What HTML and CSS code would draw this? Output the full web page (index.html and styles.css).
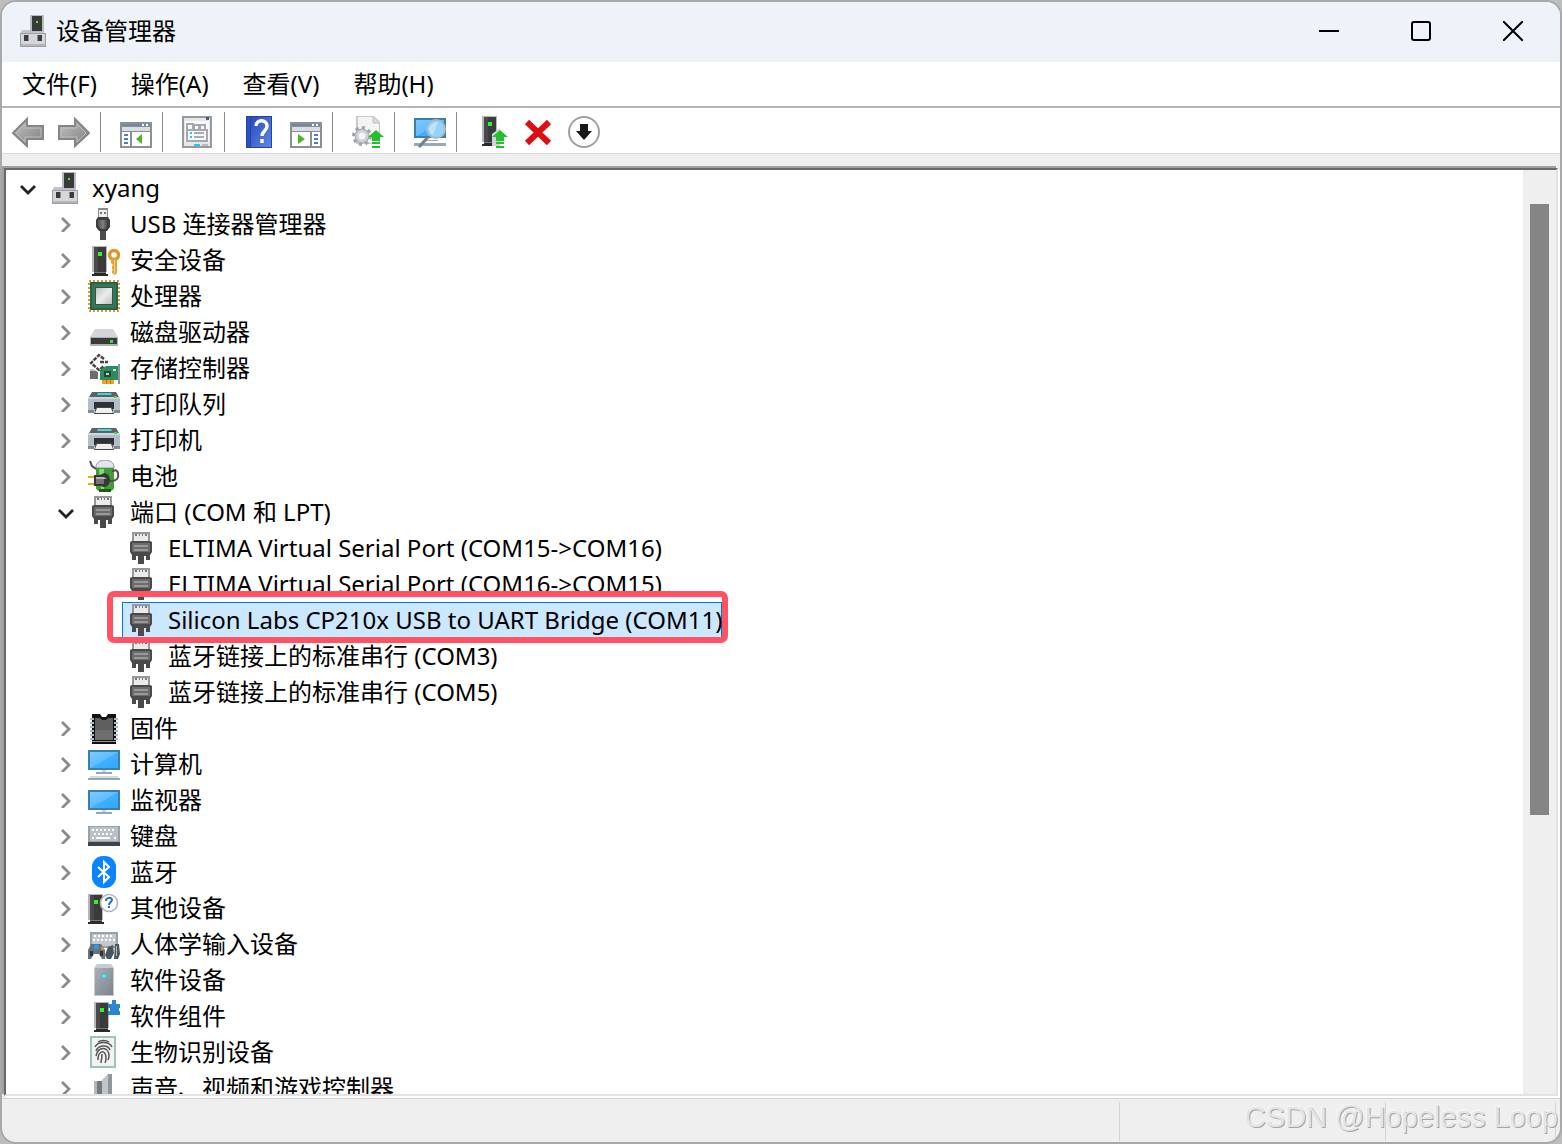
FILE: index.html
```
<!DOCTYPE html>
<html lang="zh-CN">
<head>
    <meta charset="UTF-8">
    <meta name="viewport" content="width=device-width, initial-scale=1.0">
    <title>设备管理器</title>
    <link rel="stylesheet" href="styles.css">
</head>
<body>
    <!-- Icon library -->
    <svg class="sprite" aria-hidden="true">
        <defs>
            <linearGradient id="g-dark" x1="0" y1="0" x2="1" y2="0"><stop offset="0" stop-color="#555"/><stop offset="0.5" stop-color="#808080"/><stop offset="1" stop-color="#3c3c3c"/></linearGradient>
            <linearGradient id="g-arrow" x1="0" y1="0" x2="1" y2="1"><stop offset="0" stop-color="#c4c4c4"/><stop offset="1" stop-color="#7d7d7d"/></linearGradient>
            <linearGradient id="g-screen" x1="0" y1="0" x2="1" y2="1"><stop offset="0" stop-color="#7ccbff"/><stop offset="0.5" stop-color="#5fbcff"/><stop offset="0.52" stop-color="#3fb0ff"/><stop offset="1" stop-color="#2fa8fd"/></linearGradient>
            <linearGradient id="g-help" x1="0" y1="0" x2="1" y2="1"><stop offset="0" stop-color="#2b4cb8"/><stop offset="1" stop-color="#5b86ea"/></linearGradient>
            <linearGradient id="g-case" x1="0" y1="0" x2="1" y2="1"><stop offset="0" stop-color="#a9b0b6"/><stop offset="1" stop-color="#7b858d"/></linearGradient>
            <linearGradient id="g-chip" x1="0" y1="0" x2="1" y2="1"><stop offset="0" stop-color="#c2c2c2"/><stop offset="0.5" stop-color="#ececec"/><stop offset="1" stop-color="#bdbdbd"/></linearGradient>
        </defs>

        <symbol id="i-device" viewBox="0 0 32 32">
            <path d="M12 0h14v17H12z" fill="#b9bcc0"/>
            <path d="M14 1h10v15H14z" fill="#3a3a3a"/>
            <path d="M18 6h2v2h-2z" fill="#3df23d"/>
            <path d="M4 15h8v2h14v2H2z" fill="#c3c3ca"/>
            <path d="M2 18h26v14H2z" fill="#9d9da3"/>
            <path d="M3 19h24v10H3z" fill="#d5d5dc"/>
            <path d="M3 29h24v2H3z" fill="#b5b5bc"/>
            <path d="M6 20h4v6H6zM20 20h4v6h-4z" fill="#3b3b3b"/>
            <path d="M10 20h1v6h-1zM19 20h1v6h-1z" fill="#8c8c92"/>
        </symbol>

        <symbol id="i-tower" viewBox="0 0 16 30">
            <path d="M0 0h15v26H0z" fill="#b4b8bd"/>
            <path d="M2 1h12v25H2z" fill="#3b3b3b"/>
            <path d="M2 1h4v25H2z" fill="#4a4a4a"/>
            <path d="M6 6h4v4H6z" fill="#2ff52f"/>
            <path d="M2 26h12v1H2z" fill="#777"/>
            <path d="M2 27h12v1h2v2H0v-2h2z" fill="#2b2b2b"/>
        </symbol>

        <symbol id="i-usb" viewBox="0 0 32 32">
            <path d="M10 0h10v10H10z" fill="#8b8b8b"/>
            <path d="M11 2h8v8h-8z" fill="#ececec"/>
            <path d="M12 4h2v2h-2zM16 4h2v2h-2z" fill="#777"/>
            <path d="M8 12l2-3h10l2 3v7l-3 4h-8l-3-4z" fill="#3d3d3d"/>
            <path d="M10 12h10v6l-3 3h-4l-3-3z" fill="url(#g-dark)"/>
            <path d="M12 23h6v9h-6z" fill="#4c4c4c"/>
        </symbol>

        <symbol id="i-security" viewBox="0 0 32 32">
            <use href="#i-tower" x="4" y="2" width="16" height="30"/>
            <circle cx="26" cy="11" r="4.5" fill="none" stroke="#d99a2b" stroke-width="3.5"/>
            <path d="M23 15h6v14l-2 2-3-2v-2l1-1-1-1v-3l1-1-2-2z" fill="#e2a438"/>
            <path d="M26 16h1v13h-1z" fill="#f6d083"/>
        </symbol>

        <symbol id="i-cpu" viewBox="0 0 32 32">
            <rect x="1" y="1" width="30" height="30" fill="none" stroke="#cf9b3a" stroke-width="2" stroke-dasharray="2 2"/>
            <path d="M2 2h28v28H2z" fill="#2c6148"/>
            <path d="M4 4h24v24H4z" fill="#38765a"/>
            <path d="M7 7h18v18H7z" fill="#2a5a44"/>
            <path d="M8 8h16v16H8z" fill="url(#g-chip)"/>
        </symbol>

        <symbol id="i-disk" viewBox="0 0 32 32">
            <path d="M7 13h18l5 8H2z" fill="#d3d5d8"/>
            <path d="M2 21h28v9H2z" fill="#aeb1b5"/>
            <path d="M3 22h26v6H3z" fill="#3a3a3a"/>
            <path d="M22 24h3v3h-3z" fill="#35e635"/>
        </symbol>

        <symbol id="i-storage" viewBox="0 0 32 32">
            <path d="M2 18l8-2v11H2z" fill="#6b6e70"/>
            <path d="M2 17h8v2H2z" fill="#c2c5c8"/>
            <path d="M16 7l-5-4-8 8 8 7 5-4M12 10h8" fill="none" stroke="#fff" stroke-width="5"/>
            <path d="M16 7l-5-4-8 8 8 7 5-4M12 10h8" fill="none" stroke="#444" stroke-width="2.4" stroke-dasharray="4 1"/>
            <path d="M12 28V18l6-4h12v14z" fill="#2f8a60"/>
            <path d="M16 19h7v6h-7z" fill="#234638"/>
            <path d="M18 21h3v2h-3z" fill="#b5d9c7"/>
            <path d="M25 17h3v2h-3z" fill="#bfe6d3"/>
            <path d="M14 28h12v4H14z" fill="#f0a21d"/>
            <path d="M18 28h1v4h-1zM22 28h1v4h-1z" fill="#c67c0a"/>
            <path d="M30 12h2v20h-2z" fill="#8b949a"/>
        </symbol>

        <symbol id="i-printer" viewBox="0 0 32 32">
            <path d="M4 4h24l3 5H1z" fill="#59636c"/>
            <path d="M10 5h13l1 2H9z" fill="#45d6cb"/>
            <path d="M0 9h32v14H0z" fill="#b3bec8"/>
            <path d="M0 9h32v2H0z" fill="#cfd7de"/>
            <path d="M26 8h3v2h-3z" fill="#2fe82f"/>
            <path d="M0 22h6v3H0zM26 22h6v3h-6z" fill="#7f8a93"/>
            <path d="M6 14h20v7H6z" fill="#2f3335"/>
            <path d="M8 19h16l2 7H6z" fill="#444"/>
            <path d="M9 20h14l2 5H7z" fill="#f0f0f0"/>
        </symbol>

        <symbol id="i-battery" viewBox="0 0 32 32">
            <path d="M8 7c0-4 4-7 9-7s9 3 9 7v1H8z" fill="#e4e4ee" stroke="#8f8fa8"/>
            <path d="M8 8h18v20c0 2-4 4-9 4s-9-2-9-4z" fill="#3f9e35"/>
            <path d="M11 9h5v21h-3z" fill="#85dd6e"/>
            <path d="M11 29h12v3H11z" fill="#1f5a1b"/>
            <path d="M2 1l2 5 4 3M22 21c8 0 9-4 8-8s-5-3-5-1" fill="none" stroke="#4c4c4c" stroke-width="2"/>
            <path d="M0 16h7v2H0zM0 23h7v2H0z" fill="#e0b218"/>
            <path d="M6 15h6l4-2c4 0 6 4 6 7s-2 7-6 7l-4-1H6z" fill="#363636"/>
            <path d="M8 17h6l2 2v5H8z" fill="#757575"/>
            <path d="M8 17h8l3 2H8z" fill="#b5b5b5"/>
        </symbol>

        <symbol id="i-port" viewBox="0 0 32 32">
            <path d="M6 0h18v10H6z" fill="#999"/>
            <path d="M8 2h14v8H8z" fill="#ebebeb"/>
            <path d="M9 2h2v2H9zM13 2h1v2h-1zM16 2h1v2h-1zM19 2h2v2h-2z" fill="#777"/>
            <path d="M4 10l2-1h18l2 1v10l-2 3H6l-2-3z" fill="#4a4a4a"/>
            <path d="M6 11h18v9H6z" fill="#6c6c6c"/>
            <path d="M8 13h14v2H8zM8 17h14v2H8z" fill="#999"/>
            <path d="M6 22h18v2H6zM6 24h4v4H6zM20 24h4v4h-4zM12 23h6v9h-6z" fill="#4a4a4a"/>
        </symbol>

        <symbol id="i-firmware" viewBox="0 0 32 32">
            <path d="M4 2h8l2 3h4l2-3h8v30H4z" fill="#111"/>
            <path d="M7 6h5l2 2h4l2-2h5v22H7z" fill="#5f5f5f"/>
            <path d="M7 18h18v10H7z" fill="#6e6e6e"/>
            <path d="M4 29h24v1H4z" fill="#999"/>
            <path d="M4 6v24M28 6v24" stroke="#aeb9cc" stroke-width="4" stroke-dasharray="2 2"/>
        </symbol>

        <symbol id="i-computer" viewBox="0 0 32 32">
            <path d="M0 2h32v20H0z" fill="#3a7fa9"/>
            <path d="M2 4h28v16H2z" fill="url(#g-screen)"/>
            <path d="M14 22h4v2h-4z" fill="#cdd5dc"/>
            <path d="M8 24h16v2H8z" fill="#95a5b8"/>
            <path d="M2 28h28v2H2z" fill="#d3dbe2"/>
            <path d="M0 30h32v2H0z" fill="#95a5b8"/>
        </symbol>

        <symbol id="i-monitor" viewBox="0 0 32 32">
            <path d="M0 6h32v20H0z" fill="#3a7fa9"/>
            <path d="M2 8h28v16H2z" fill="url(#g-screen)"/>
            <path d="M14 26h4v2h-4z" fill="#cdd5dc"/>
            <path d="M8 28h16v2H8z" fill="#95a5b8"/>
        </symbol>

        <symbol id="i-keyboard" viewBox="0 0 32 32">
            <path d="M0 6h32v17H0z" fill="#98a1a9"/>
            <path d="M2 7h28v14H2z" fill="#b9c0c6"/>
            <path d="M4 10h24M6 14h20" stroke="#fff" stroke-width="2" stroke-dasharray="2 2"/>
            <path d="M4 18h2M8 18h14M26 18h2" stroke="#fff" stroke-width="2"/>
            <path d="M0 22h32v4H0z" fill="#3b444b"/>
        </symbol>

        <symbol id="i-bluetooth" viewBox="0 0 32 32">
            <rect x="4" y="0" width="24" height="32" rx="11" fill="#0a84ff"/>
            <path d="M10 11l11 10-5 5V6l5 5-11 10" fill="none" stroke="#fff" stroke-width="2"/>
        </symbol>

        <symbol id="i-other" viewBox="0 0 32 32">
            <use href="#i-tower" x="0" y="2" width="16" height="30"/>
            <circle cx="21" cy="11" r="8.5" fill="#fff" stroke="#b5b5b5" stroke-width="1.6"/>
            <path d="M18 9c0-4 6-4 6-1 0 2-3 2-3 5M21 14v2" fill="none" stroke="#1f70b8" stroke-width="2"/>
        </symbol>

        <symbol id="i-hid" viewBox="0 0 32 32">
            <path d="M2 4h28v16H2z" fill="#98a1a9"/>
            <path d="M4 6h24v12H4z" fill="#c3c9ce"/>
            <path d="M6 8h20M5 12h22" stroke="#fff" stroke-width="2" stroke-dasharray="2 2"/>
            <path d="M0 31V22l3-6h10l4 6v9h-3l-3-5H6l-3 5z" fill="#66727c"/>
            <path d="M6 17h5v4H6z" fill="#1ca0f5"/>
            <path d="M13 19h3v3h-3z" fill="#e08a3a"/>
            <path d="M2 23h3v5H2zM12 23h3v5h-3z" fill="#2f363b"/>
            <path d="M20 19l5-2 1 8-3 6h-4l-2-4zM27 16h4l1 10-2 5h-4z" fill="#4b565f"/>
            <path d="M28 18h1v10h-1z" fill="#b9c2ca"/>
        </symbol>

        <symbol id="i-software" viewBox="0 0 32 32">
            <path d="M9 0h14l3 4v28H6V4z" fill="#c6cbd0"/>
            <path d="M7 4h18v27H7z" fill="url(#g-case)"/>
            <path d="M14 10h5v4h-5z" fill="#3ccbe0"/>
            <path d="M15 11h2v2h-2z" fill="#66f5ff"/>
        </symbol>

        <symbol id="i-component" viewBox="0 0 32 32">
            <use href="#i-tower" x="6" y="2" width="16" height="30"/>
            <path d="M20 4h4V0h4v4h4v4h-1v3h1v4H20v-4h2V8h-2z" fill="#2a86cf"/>
        </symbol>

        <symbol id="i-biometric" viewBox="0 0 32 32">
            <path d="M2 0h26v32H2z" fill="#9fc3b8"/>
            <path d="M4 2h22v28H4z" fill="#f1f3f2"/>
            <path d="M10 6c3-2 8-2 11 0M7 11c3-6 14-6 17 0M8 15c2-6 12-7 14-1M8 20c2-10 13-10 13 0M10 24c0-10 8-11 8-2M13 27c0-2 1-5 1-9M17 27c1-2 1-2 1-5M20 24c1-2 1-3 1-5" fill="none" stroke="#555" stroke-width="1.5"/>
        </symbol>

        <symbol id="i-sound" viewBox="0 0 32 32">
            <path d="M6 9h8v13H6z" fill="#73797f"/>
            <path d="M6 9h3v13H6z" fill="#b2b8bd"/>
            <path d="M14 8l6-6h4v28h-3l-7-8z" fill="#c0c5c9"/>
            <path d="M20 2h4v28h-4z" fill="#8f969c"/>
        </symbol>

        <symbol id="i-back" viewBox="0 0 32 32">
            <path d="M1 17L15 3v7h16v13H15v7z" fill="url(#g-arrow)" stroke="#858585" stroke-width="2"/>
            <path d="M4 17l9-9v4h16v9H13v5z" fill="none" stroke="#bdbdbd"/>
        </symbol>

        <symbol id="i-forward" viewBox="0 0 32 32">
            <path d="M31 17L17 3v7H1v13h16v7z" fill="url(#g-arrow)" stroke="#858585" stroke-width="2"/>
            <path d="M28 17l-9-9v4H3v9h16v5z" fill="none" stroke="#bdbdbd"/>
        </symbol>

        <symbol id="i-pane" viewBox="0 0 32 32">
            <path d="M0 6h32v26H0z" fill="#8a9096"/>
            <path d="M2 8h28v2H2z" fill="#7388a3"/>
            <path d="M22 8h2v2h-2zM26 8h2v2h-2z" fill="#fff"/>
            <path d="M2 11h28v4H2z" fill="#d7dde3"/>
            <path d="M2 16h28v14H2z" fill="#fff"/>
        </symbol>

        <symbol id="i-tree" viewBox="0 0 32 32">
            <use href="#i-pane" width="32" height="32"/>
            <path d="M4 19h4M4 23h4M4 27h4" stroke="#4d7dc0" stroke-width="2"/>
            <path d="M10 16h2v14h-2z" fill="#8a9096"/>
            <path d="M22 18v10l-6-5z" fill="#4cb52c"/>
        </symbol>

        <symbol id="i-action" viewBox="0 0 32 32">
            <use href="#i-pane" width="32" height="32"/>
            <path d="M24 19h4M24 23h4M24 27h4" stroke="#4d7dc0" stroke-width="2"/>
            <path d="M20 16h2v14h-2z" fill="#8a9096"/>
            <path d="M8 18v10l7-5z" fill="#4cb52c"/>
        </symbol>

        <symbol id="i-properties" viewBox="0 0 32 32">
            <path d="M0 0h30v32H0z" fill="#96999e"/>
            <path d="M2 2h26v28H2z" fill="#e6e9ec"/>
            <path d="M24 1h3v3h-3z" fill="#3c5c8c"/>
            <path d="M3 5h24v21H3z" fill="#f9f9fa"/>
            <path d="M5 14h20v11H5zM5 14V8h6v5M12 13V9h5v4M18 13V9h5v5" fill="none" stroke="#a5a8af" stroke-width="2"/>
            <path d="M8 16h2v2H8zM8 20h2v2H8z" fill="#25c4f2"/>
            <path d="M12 17h10M12 21h10" stroke="#8d9198" stroke-width="1.5"/>
            <path d="M12 28h6v2h-6z" fill="#25c4f2"/>
            <path d="M20 28h6v2h-6z" fill="#b9bcc1"/>
        </symbol>

        <symbol id="i-help" viewBox="1 0 32 32">
            <path d="M3 0h26v32H3z" fill="#2443a0"/>
            <path d="M8 1h20v30H8z" fill="url(#g-help)"/>
            <path d="M4 1h3v30H4z" fill="#2b52c4"/>
            <path d="M13 10c0-7 11-7 11 0 0 5-5 5-5 10M19 23v4" fill="none" stroke="#fff" stroke-width="3.4"/>
        </symbol>

        <symbol id="i-up" viewBox="0 0 16 18">
            <path d="M8 0l8 7h-4v4H4V7H0zM4 12h8v2H4zM4 16h8v2H4z" fill="#22c12a"/>
        </symbol>

        <symbol id="i-driver" viewBox="0 0 32 32">
            <path d="M4 0h18l6 6v22H4z" fill="#c9c9c9"/>
            <path d="M6 1h15v6h6v20H6z" fill="#f4f4f4"/>
            <path d="M21 1v6h6" fill="#ddd" stroke="#bbb"/>
            <circle cx="10" cy="20" r="8.5" fill="none" stroke="#9fa6ac" stroke-width="3" stroke-dasharray="3.3 3.3"/>
            <circle cx="10" cy="20" r="5" fill="#eef1f3" stroke="#9fa6ac" stroke-width="5"/>
            <circle cx="10" cy="20" r="5" fill="#f4f4f4" stroke="#ccd3d8" stroke-width="3"/>
            <use href="#i-up" x="16" y="14" width="16" height="18"/>
        </symbol>

        <symbol id="i-scan" viewBox="0 0 32 32">
            <path d="M0 2h32v20H0z" fill="#3a7fa9"/>
            <path d="M2 4h28v16H2z" fill="url(#g-screen)"/>
            <path d="M10 24h14v1H10zM0 27h32v3H0z" fill="#9aa9b9"/>
            <path d="M14 21L5 31" stroke="#777f86" stroke-width="3"/>
            <circle cx="22" cy="13" r="9" fill="#93d4fb" stroke="#a9b7c2" stroke-width="2"/>
            <path d="M15 13c1-5 5-7 9-7l-5 13c-2-1-4-3-4-6z" fill="#bce5fd"/>
        </symbol>

        <symbol id="i-enable" viewBox="0 0 32 32">
            <use href="#i-tower" x="6" y="0" width="16" height="30"/>
            <path d="M16 18l8-6v18h-8z" fill="#cfd2d6"/>
            <use href="#i-up" x="16" y="14" width="16" height="18"/>
        </symbol>

        <symbol id="i-remove" viewBox="0 0 32 32">
            <path d="M5 6l22 21M27 6L5 27" stroke="#dd0d14" stroke-width="6"/>
        </symbol>

        <symbol id="i-down" viewBox="0 0 32 32">
            <circle cx="16" cy="16" r="15" fill="#fff" stroke="#a0a0a0" stroke-width="2"/>
            <path d="M12 8h8v7h4l-8 9-8-9h4z" fill="#161616"/>
        </symbol>

        <symbol id="i-closed" viewBox="0 0 16 16">
            <path d="M4 2l7 7-7 7" fill="none" stroke="#8b8b8b" stroke-width="2.8"/>
        </symbol>

        <symbol id="i-open" viewBox="0 0 16 16">
            <path d="M1 6l7 7 7-7" fill="none" stroke="#222" stroke-width="2.8"/>
        </symbol>
    </svg>

    <div class="window">
        <header class="title-bar">
            <svg class="title-icon"><use href="#i-device"/></svg>
            <h1>设备管理器</h1>
            <div class="window-controls">
                <button type="button" aria-label="最小化"><svg viewBox="0 0 20 20"><path d="M0 10h20" stroke="#000" stroke-width="2"/></svg></button>
                <button type="button" aria-label="最大化"><svg viewBox="0 0 20 20"><rect x="1" y="1" width="18" height="18" rx="2" fill="none" stroke="#000" stroke-width="2"/></svg></button>
                <button type="button" aria-label="关闭"><svg viewBox="0 0 20 20"><path d="M0 0l20 20M20 0L0 20" stroke="#000" stroke-width="2"/></svg></button>
            </div>
        </header>

        <nav class="menu-bar">
            <button type="button">文件(F)</button>
            <button type="button">操作(A)</button>
            <button type="button">查看(V)</button>
            <button type="button">帮助(H)</button>
        </nav>

        <div class="toolbar">
            <button type="button" aria-label="后退"><svg><use href="#i-back"/></svg></button>
            <button type="button" aria-label="前进"><svg><use href="#i-forward"/></svg></button>
            <span class="separator"></span>
            <button type="button" aria-label="显示/隐藏控制台树"><svg><use href="#i-tree"/></svg></button>
            <span class="separator"></span>
            <button type="button" aria-label="属性"><svg><use href="#i-properties"/></svg></button>
            <span class="separator"></span>
            <button type="button" aria-label="帮助"><svg><use href="#i-help"/></svg></button>
            <button type="button" aria-label="显示/隐藏操作窗格"><svg><use href="#i-action"/></svg></button>
            <span class="separator"></span>
            <button type="button" aria-label="更新驱动程序"><svg><use href="#i-driver"/></svg></button>
            <span class="separator"></span>
            <button type="button" aria-label="扫描检测硬件改动"><svg><use href="#i-scan"/></svg></button>
            <span class="separator"></span>
            <button type="button" aria-label="启用设备"><svg><use href="#i-enable"/></svg></button>
            <button type="button" aria-label="卸载设备"><svg><use href="#i-remove"/></svg></button>
            <button type="button" aria-label="禁用设备"><svg><use href="#i-down"/></svg></button>
        </div>

        <main class="tree-panel">
            <ul class="tree">
                <li>
                    <div class="row"><button type="button" class="toggle" aria-label="折叠"><svg><use href="#i-open"/></svg></button><div class="item"><svg><use href="#i-device"/></svg><span>xyang</span></div></div>
                    <ul>
                        <li><div class="row"><button type="button" class="toggle" aria-label="展开"><svg><use href="#i-closed"/></svg></button><div class="item"><svg><use href="#i-usb"/></svg><span>USB 连接器管理器</span></div></div></li>
                        <li><div class="row"><button type="button" class="toggle" aria-label="展开"><svg><use href="#i-closed"/></svg></button><div class="item"><svg><use href="#i-security"/></svg><span>安全设备</span></div></div></li>
                        <li><div class="row"><button type="button" class="toggle" aria-label="展开"><svg><use href="#i-closed"/></svg></button><div class="item"><svg><use href="#i-cpu"/></svg><span>处理器</span></div></div></li>
                        <li><div class="row"><button type="button" class="toggle" aria-label="展开"><svg><use href="#i-closed"/></svg></button><div class="item"><svg><use href="#i-disk"/></svg><span>磁盘驱动器</span></div></div></li>
                        <li><div class="row"><button type="button" class="toggle" aria-label="展开"><svg><use href="#i-closed"/></svg></button><div class="item"><svg><use href="#i-storage"/></svg><span>存储控制器</span></div></div></li>
                        <li><div class="row"><button type="button" class="toggle" aria-label="展开"><svg><use href="#i-closed"/></svg></button><div class="item"><svg><use href="#i-printer"/></svg><span>打印队列</span></div></div></li>
                        <li><div class="row"><button type="button" class="toggle" aria-label="展开"><svg><use href="#i-closed"/></svg></button><div class="item"><svg><use href="#i-printer"/></svg><span>打印机</span></div></div></li>
                        <li><div class="row"><button type="button" class="toggle" aria-label="展开"><svg><use href="#i-closed"/></svg></button><div class="item"><svg><use href="#i-battery"/></svg><span>电池</span></div></div></li>
                        <li>
                            <div class="row"><button type="button" class="toggle" aria-label="折叠"><svg><use href="#i-open"/></svg></button><div class="item"><svg><use href="#i-port"/></svg><span>端口 (COM 和 LPT)</span></div></div>
                            <ul>
                                <li><div class="row leaf"><div class="item"><svg><use href="#i-port"/></svg><span>ELTIMA Virtual Serial Port (COM15-&gt;COM16)</span></div></div></li>
                                <li><div class="row leaf"><div class="item"><svg><use href="#i-port"/></svg><span>ELTIMA Virtual Serial Port (COM16-&gt;COM15)</span></div></div></li>
                                <li><div class="row leaf"><div class="item selected"><svg><use href="#i-port"/></svg><span>Silicon Labs CP210x USB to UART Bridge (COM11)</span></div></div></li>
                                <li><div class="row leaf"><div class="item"><svg><use href="#i-port"/></svg><span>蓝牙链接上的标准串行 (COM3)</span></div></div></li>
                                <li><div class="row leaf"><div class="item"><svg><use href="#i-port"/></svg><span>蓝牙链接上的标准串行 (COM5)</span></div></div></li>
                            </ul>
                        </li>
                        <li><div class="row"><button type="button" class="toggle" aria-label="展开"><svg><use href="#i-closed"/></svg></button><div class="item"><svg><use href="#i-firmware"/></svg><span>固件</span></div></div></li>
                        <li><div class="row"><button type="button" class="toggle" aria-label="展开"><svg><use href="#i-closed"/></svg></button><div class="item"><svg><use href="#i-computer"/></svg><span>计算机</span></div></div></li>
                        <li><div class="row"><button type="button" class="toggle" aria-label="展开"><svg><use href="#i-closed"/></svg></button><div class="item"><svg><use href="#i-monitor"/></svg><span>监视器</span></div></div></li>
                        <li><div class="row"><button type="button" class="toggle" aria-label="展开"><svg><use href="#i-closed"/></svg></button><div class="item"><svg><use href="#i-keyboard"/></svg><span>键盘</span></div></div></li>
                        <li><div class="row"><button type="button" class="toggle" aria-label="展开"><svg><use href="#i-closed"/></svg></button><div class="item"><svg><use href="#i-bluetooth"/></svg><span>蓝牙</span></div></div></li>
                        <li><div class="row"><button type="button" class="toggle" aria-label="展开"><svg><use href="#i-closed"/></svg></button><div class="item"><svg><use href="#i-other"/></svg><span>其他设备</span></div></div></li>
                        <li><div class="row"><button type="button" class="toggle" aria-label="展开"><svg><use href="#i-closed"/></svg></button><div class="item"><svg><use href="#i-hid"/></svg><span>人体学输入设备</span></div></div></li>
                        <li><div class="row"><button type="button" class="toggle" aria-label="展开"><svg><use href="#i-closed"/></svg></button><div class="item"><svg><use href="#i-software"/></svg><span>软件设备</span></div></div></li>
                        <li><div class="row"><button type="button" class="toggle" aria-label="展开"><svg><use href="#i-closed"/></svg></button><div class="item"><svg><use href="#i-component"/></svg><span>软件组件</span></div></div></li>
                        <li><div class="row"><button type="button" class="toggle" aria-label="展开"><svg><use href="#i-closed"/></svg></button><div class="item"><svg><use href="#i-biometric"/></svg><span>生物识别设备</span></div></div></li>
                        <li><div class="row"><button type="button" class="toggle" aria-label="展开"><svg><use href="#i-closed"/></svg></button><div class="item"><svg><use href="#i-sound"/></svg><span>声音、视频和游戏控制器</span></div></div></li>
                    </ul>
                </li>
            </ul>
            <div class="scrollbar"><div class="thumb"></div></div>
        </main>

        <footer class="status-bar">
            <span class="status-main"></span>
            <span class="status-info"></span>
            <span class="status-extra"></span>
        </footer>
    </div>
    <div class="watermark">CSDN @Hopeless Loop</div>
</body>
</html>
```
FILE: styles.css
```
* {
    margin: 0;
    padding: 0;
    box-sizing: border-box;
}

body {
    height: 100vh;
    overflow: hidden;
    background-color: #bdbdbd;
    color: #000;
    font-family: 'Noto Sans', 'Noto Sans CJK SC', sans-serif;
    font-size: 24px;
}

button {
    border: none;
    background: none;
    color: inherit;
    font: inherit;
}

ul {
    list-style: none;
}

svg {
    display: block;
    flex: none;
    width: 32px;
    height: 32px;
}

.sprite {
    position: absolute;
    width: 0;
    height: 0;
}

.window {
    display: flex;
    flex-direction: column;
    height: 100%;
    border: 2px solid #a9a9a9;
    border-radius: 16px;
    background-color: #efefef;
    overflow: hidden;
}

/* Title bar */
.title-bar {
    display: flex;
    align-items: center;
    height: 60px;
    padding: 0 1px 3px 16px;
    background-color: #eef3f9;
}

.title-bar h1 {
    margin-left: 6px;
    font-size: 24px;
    font-weight: 400;
    line-height: 36px;
}

.window-controls {
    display: flex;
    align-self: stretch;
    margin-left: auto;
}

.window-controls button {
    display: flex;
    align-items: center;
    justify-content: center;
    width: 92px;
}

.window-controls svg {
    width: 20px;
    height: 20px;
}

/* Menu */
.menu-bar {
    display: flex;
    height: 46px;
    padding: 0 0 3px 3px;
    border-bottom: 2px solid #b4b4b4;
    background-color: #fff;
}

.menu-bar button {
    padding: 0 17px;
}

/* Toolbar */
.toolbar {
    display: flex;
    height: 46px;
    padding: 4px 3px 1px;
    border-bottom: 1px solid #d9d9d9;
    background-color: #fff;
}

.toolbar button {
    display: flex;
    align-items: center;
    justify-content: center;
    width: 46px;
}

.separator {
    width: 1px;
    margin: 0 12px 0 3px;
    background-color: #8a8a8a;
}

/* Device tree */
.tree-panel {
    display: flex;
    flex: 1;
    min-height: 0;
    margin: 14px 2px 2px;
    border: 2px solid #e3e3e3;
    border-top-color: #696969;
    border-left-color: #696969;
    background-color: #fff;
    box-shadow: -2px -2px #a0a0a0, 2px 2px #fff;
}

.tree {
    flex: 1;
    overflow: hidden;
}

.tree ul {
    padding-left: 38px;
}

.row {
    display: flex;
    height: 36px;
}

.leaf {
    padding-left: 40px;
}

.toggle {
    display: flex;
    align-items: center;
    justify-content: center;
    width: 40px;
    padding-left: 4px;
}

.toggle svg {
    width: 16px;
    height: 16px;
}

.item {
    display: flex;
    align-items: center;
    gap: 10px;
    padding: 0 4px;
    line-height: 36px;
    white-space: nowrap;
}

.selected {
    position: relative;
    padding-right: 0;
    background-color: #cce8ff;
    box-shadow: inset 0 0 0 1px #0078d7;
}

.selected::after {
    content: '';
    position: absolute;
    z-index: 1;
    inset: -11px -6px -5px -15px;
    border: 6px solid #ff5263;
    border-radius: 7px;
}

.scrollbar {
    width: 33px;
    padding: 34px 7px 64px;
    background-color: #efefef;
}

.thumb {
    height: 74%;
    background-color: #858585;
}

/* Status bar */
.status-bar {
    display: flex;
    height: 44px;
    padding: 3px 4px 1px 0;
    border-top: 1px solid #d4d4d4;
}

.status-main {
    flex: 1;
}

.status-info,
.status-extra {
    border-left: 1px solid #d4d4d4;
}

.status-info {
    width: 266px;
}

.status-extra {
    width: 171px;
    border-right: 1px solid #d4d4d4;
}

.watermark {
    position: absolute;
    right: 4px;
    bottom: 9px;
    color: #e4e4e4;
    font-family: 'Liberation Sans', sans-serif;
    font-size: 29px;
    line-height: 36px;
    text-shadow: 1px 1px #a5a5a5, -1px -1px #f6f6f6;
}
```
